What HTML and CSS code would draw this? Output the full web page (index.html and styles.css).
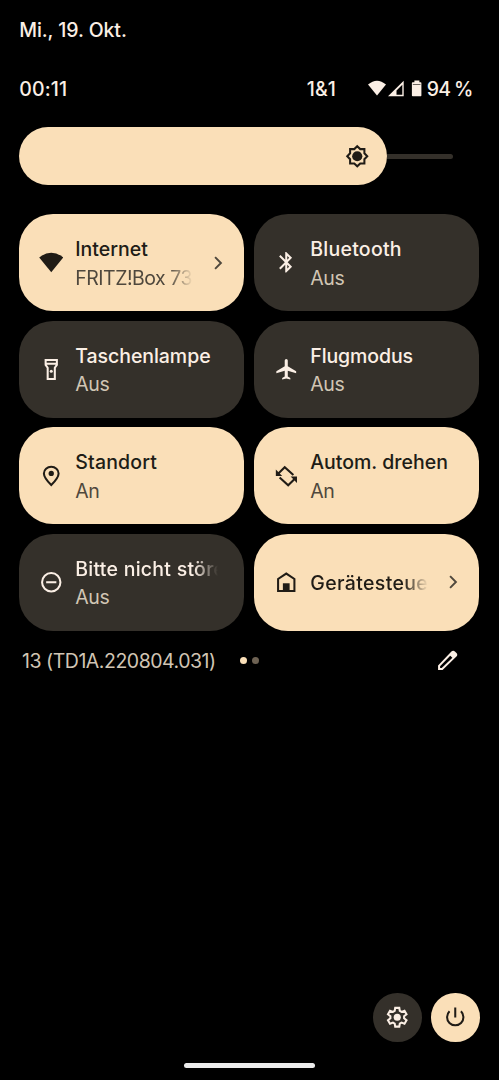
FILE: index.html
```html
<!DOCTYPE html>
<html lang="de">
<head>
<meta charset="utf-8">
<meta name="viewport" content="width=device-width">
<title>Schnelleinstellungen</title>
<link rel="stylesheet" href="styles.css">
</head>
<body>
<main class="shade">
  <header class="head">
    <div class="date">Mi., 19. Okt.</div>
    <div class="status">
      <span class="clock">00:11</span>
      <span class="carrier">1&amp;1</span>
      <svg class="signals" viewBox="0 0 54 18"><path d="M0 4.5Q9-3.2 18 4.5L9 15.5Z"/><path fill-rule="evenodd" d="M20 16.2 35.7.8v15.4ZM28.500 14.8h5.8V4.7l-5.8 5.700Z"/><path d="M46.4.5h5v1.7h1.3q.7 0 .7.7v12.6q0 .7-.7.7h-8q-.8 0-.8-.7V2.900q0-.7.8-.7h1.700Z"/><path class="notch" d="M44.800 4h7.700v.8h-7.700z"/></svg>
      <span class="percent">94 %</span>
    </div>
  </header>

  <div class="brightness">
    <div class="level">
      <svg class="sun" viewBox="0 0 24 24"><path class="line" d="M12 2.200 14.900 5h4.100v4.100l2.800 2.900-2.800 2.900V19h-4.100L12 21.800 9.100 19H5v-4.100L2.200 12 5 9.100V5h4.100Z"/><circle cx="12" cy="12" r="5"/></svg>
    </div>
    <div class="rest"></div>
  </div>

  <section class="tiles">
    <div class="tile on">
      <svg class="icon" viewBox="0 0 24 24"><path d="M.2 7.300Q12-2 23.800 7.300L12 21.700Z"/></svg>
      <div class="label"><b>Internet</b><span class="s-wifi fade">FRITZ!Box 7360</span></div>
      <svg class="chevron" viewBox="0 0 24 24"><path d="m8.500 5 7 7-7 7"/></svg>
    </div>
    <div class="tile">
      <svg class="icon" viewBox="0 0 24 24"><path d="M17.710 7.710 12 2h-1v7.590L6.410 5 5 6.410 10.590 12 5 17.590 6.410 19 11 14.410V22h1l5.710-5.710-4.300-4.290 4.300-4.290zM13 5.830l1.880 1.880L13 9.590V5.830zm1.880 10.460L13 18.170v-3.760l1.880 1.880z"/></svg>
      <div class="label"><b class="t-bluetooth">Bluetooth</b><span>Aus</span></div>
    </div>
    <div class="tile">
      <svg class="icon" viewBox="0 0 24 24"><path class="line" d="M6.500 3h11v4.700L15.500 10.500V21.500h-7V10.500L6.500 7.700ZM6.500 6.600h11"/><circle cx="12" cy="14" r="1.500"/></svg>
      <div class="label"><b class="t-torch">Taschenlampe</b><span>Aus</span></div>
    </div>
    <div class="tile">
      <svg class="icon" viewBox="0 0 24 24"><path d="M21.700 16v-2L13.500 9V3.500a1.500 1.500 0 0 0-3 0V9L2.300 14v2l8.200-2.500V19L8 20.500V22l4-1 4 1v-1.500L13.500 19v-5.500Z"/></svg>
      <div class="label"><b class="t-flight">Flugmodus</b><span>Aus</span></div>
    </div>
    <div class="tile on">
      <svg class="icon" viewBox="0 0 24 24"><path class="line" d="M12 20.600C7.500 16 4.800 12.500 4.800 9.200a7.200 6.500 0 0 1 14.400 0c0 3.300-2.700 6.800-7.200 11.400Z"/><circle cx="12" cy="9.200" r="2.600"/></svg>
      <div class="label"><b class="t-place">Standort</b><span>An</span></div>
    </div>
    <div class="tile on">
      <svg class="icon" viewBox="0 0 24 24"><path class="line" d="M19 10.800 10.500 3.100 4 9.500M5.500 13.200l8.400 7.700 6.500-6.400"/><path d="M1.800 5.500v6.200H8ZM22.500 18.500v-6.200h-6.200Z"/></svg>
      <div class="label"><b>Autom. drehen</b><span>An</span></div>
    </div>
    <div class="tile">
      <svg class="icon" viewBox="0 0 24 24"><circle class="line" cx="12" cy="12" r="9"/><path d="M7 11h10v2H7z"/></svg>
      <div class="label"><b class="t-dnd fade">Bitte nicht stören</b><span>Aus</span></div>
    </div>
    <div class="tile on">
      <svg class="icon" viewBox="0 0 24 24"><path class="line" d="M4 20.500V8.800L12 3.500l8 5.300V20.500Z"/><path d="M8.700 13h6.600v7.500H8.700z"/></svg>
      <div class="label"><b class="t-device fade">Gerätesteuerung</b></div>
      <svg class="chevron" viewBox="0 0 24 24"><path d="m8.500 5 7 7-7 7"/></svg>
    </div>
  </section>

  <div class="info">
    <span class="build">13 (TD1A.220804.031)</span>
    <i class="dot current"></i><i class="dot"></i>
    <svg class="pencil" viewBox="0 0 24 24"><path class="line" d="M4 20.500v-3L16.800 4.200q1-1 2 0l1.500 1.500q1 1 0 2L7 20.500Z"/><path d="m14 6.500 3.500-3.500 4 4-3.500 3.500Z"/></svg>
  </div>

  <footer class="actions">
    <div class="round"><svg class="icon" viewBox="0 0 24 24"><path class="line" d="M10 2.800h4l.5 3 1.700 1 2.900-1.100 2 3.400-2.400 1.900v2l2.400 1.900-2 3.400-2.900-1.100-1.700 1-.5 3h-4l-.5-3-1.700-1-2.900 1.100-2-3.400L5.300 13v-2L2.900 9.100l2-3.400 2.900 1.100 1.700-1Z"/><circle cx="12" cy="12" r="3.500"/></svg></div>
    <div class="round on"><svg class="icon" viewBox="0 0 24 24"><path class="line" d="M12 2.500v9.800M6.400 6.200a8 8 0 1 0 11.200 0"/></svg></div>
  </footer>
  <div class="handle"></div>
</main>
</body>
</html>
```
FILE: styles.css
```css
* { box-sizing: border-box; }
body { margin: 0; background: #000; color: #fbefe5; font-family: Inter, "Liberation Sans", sans-serif; }
svg { display: block; fill: currentColor; flex: none; }
.line { fill: none; stroke: currentColor; stroke-width: 2; }
.shade { width: 499px; height: 1080px; padding: 18px 19.300px 0; display: flex; flex-direction: column; overflow: hidden; }

.head { height: 109px; font-size: 19.500px; font-weight: 450; line-height: 24px; white-space: nowrap; }
.date { letter-spacing: -.1px; }
.status { display: flex; align-items: center; margin-top: 35px; height: 24px; }
.clock { width: 287.500px; letter-spacing: .15px; }
.carrier { width: 61.500px; }
.signals { width: 54px; height: 18px; margin-right: 4.500px; }
.percent { letter-spacing: -.9px; word-spacing: -.5px; }
.notch { fill: #4a443f; }

.brightness { display: flex; align-items: center; height: 58px; }
.level { width: 367.500px; height: 58px; border-radius: 29px; background: #fadfb8; color: #201c16; display: flex; align-items: center; justify-content: flex-end; padding-right: 17px; }
.sun { width: 24.500px; height: 24.500px; }
.rest { width: 66px; height: 5px; background: #34302a; border-radius: 0 3px 3px 0; }

.tiles { display: grid; grid-template-columns: 225.200px 225.200px; grid-auto-rows: 96.800px; gap: 9.800px; margin-top: 29.300px; }
.tile { display: flex; align-items: center; border-radius: 34px; background: #34302a; padding-left: 19.300px; }
.on { background: #fadfb8; color: #201c16; }
.icon { width: 24.500px; height: 24.500px; }
.label { width: 118px; margin-left: 12.200px; padding-top: 2px; display: grid; font-size: 19.500px; line-height: 28.500px; white-space: nowrap; }
.tile:not(:has(.chevron)) .label { width: 143px; }
.label b { font-weight: 450; }
.label span { color: #d1c5b4; letter-spacing: -.4px; }
.on .label span { color: #4f483d; }
.label .s-wifi { letter-spacing: -.5px; }
.t-bluetooth { letter-spacing: .25px; }
.t-torch { letter-spacing: -.05px; }
.t-flight { letter-spacing: -.1px; }
.t-place { letter-spacing: .15px; }
.t-dnd { letter-spacing: .25px; }
.t-device { letter-spacing: .35px; }
.fade { overflow: hidden; -webkit-mask-image: linear-gradient(to right, #000 calc(100% - 24px), transparent); mask-image: linear-gradient(to right, #000 calc(100% - 24px), transparent); }
.chevron { width: 20px; height: 20px; margin-left: 14.500px; fill: none; stroke: #4f483d; stroke-width: 2.300; }

.info { display: flex; align-items: center; height: 30px; margin-top: 14.500px; }
.build { width: 221px; padding: 1px 0 0 2.700px; font-size: 19.500px; letter-spacing: -.47px; color: #d1c5b4; white-space: nowrap; }
.dot { width: 7px; height: 7px; border-radius: 50%; background: #6e6253; margin-right: 5px; }
.current { background: #fadfb8; }
.pencil { width: 24.500px; height: 24.500px; margin-left: 171px; }

.actions { display: flex; justify-content: flex-end; gap: 9.700px; margin-top: 317.700px; }
.round { width: 48.500px; height: 48.500px; border-radius: 50%; background: #34302a; display: grid; place-items: center; }
.round.on { background: #fadfb8; }
.handle { width: 131px; height: 5px; margin: 21.500px auto 0; border-radius: 3px; background: #ececec; }
```
